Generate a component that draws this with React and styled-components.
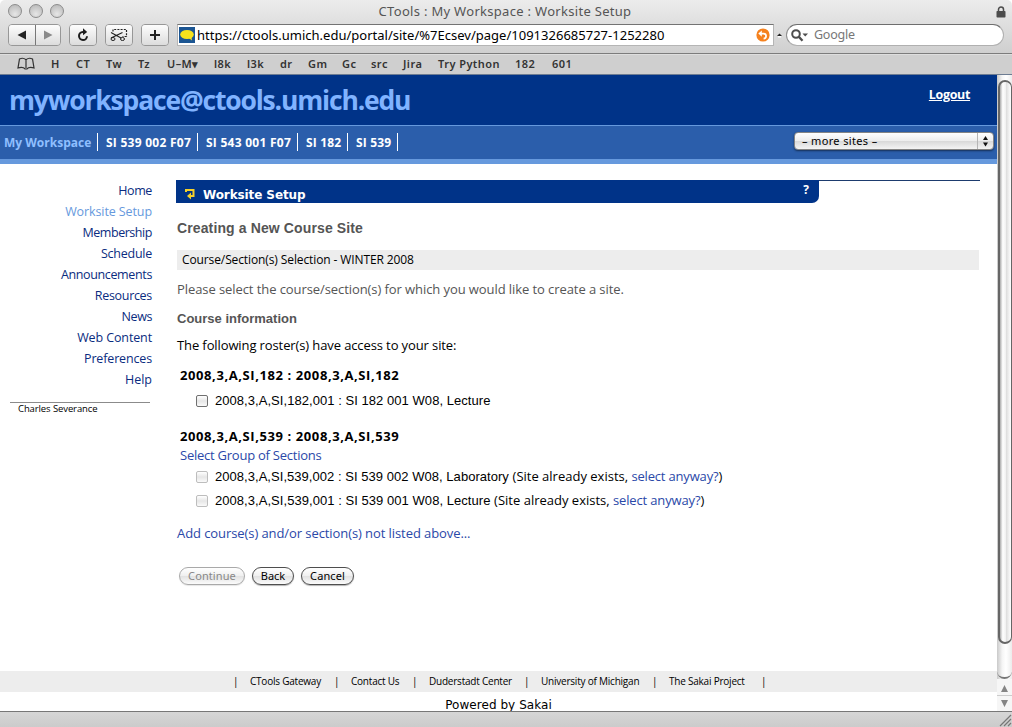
import React from "react";
import styled, { createGlobalStyle, css } from "styled-components";

const trebuchet = '"Open Sans", "Noto Sans", sans-serif';
const lucida = '"Noto Sans", "Open Sans", sans-serif';
const helvetica = '"Liberation Sans", Arial, sans-serif';
const verdana = '"DejaVu Sans", Verdana, sans-serif';

const GlobalStyle = createGlobalStyle`
  * { box-sizing: border-box; }
  body { margin: 0; background: #fff; overflow: hidden; }
`;

const Text = styled.span`
  font-family: ${(p) => p.$font || trebuchet};
  font-size: ${(p) => p.$size || 13}px;
  font-weight: ${(p) => p.$weight || 400};
  letter-spacing: ${(p) => p.$ls || 0}px;
  color: ${(p) => p.$color || "#000"};
  white-space: pre;
  line-height: 20px;
`;

const Copy = styled(Text)`
  padding-bottom: 2px;
`;

const Window = styled.div`
  width: 1012px;
  height: 727px;
  display: flex;
  flex-direction: column;
  background: #fff;
`;

const Chrome = styled.header`
  height: 54px;
  background: linear-gradient(#ececec, #cfcfcf);
  border-bottom: 1px solid #7c7c7c;
  border-radius: 5px 5px 0 0;
`;

const TitleBar = styled.div`
  height: 23px;
  display: grid;
  grid-template-columns: 100px 1fr 104px;
  align-items: center;
  padding: 0 6px 0 8px;
`;

const Lights = styled.div`
  display: flex;
  gap: 7px;
`;

const Light = styled.i`
  width: 14px;
  height: 14px;
  margin-top: -1px;
  border-radius: 50%;
  border: 1px solid #8c8c8c;
  background: radial-gradient(circle at 50% 75%, #e6e6e6, #b4b4b4);
`;

const Title = styled(Copy)`
  text-align: center;
`;

const Lock = styled.svg`
  justify-self: end;
`;

const Toolbar = styled.div`
  display: flex;
  align-items: flex-start;
  padding: 1px 8px 0;
`;

const ButtonGroup = styled.div`
  display: flex;
  margin-right: 8px;
  border: 1px solid #979797;
  border-radius: 4px;
  overflow: hidden;
`;

const ToolButton = styled.button`
  width: ${(p) => p.$w}px;
  height: 20px;
  padding: 0;
  border: 0;
  display: flex;
  align-items: center;
  justify-content: center;
  background: linear-gradient(#fdfdfd, #dcdcdc);
  & + & { border-left: 1px solid #777; }
`;

const Address = styled.div`
  width: 597px;
  height: 22px;
  display: flex;
  align-items: center;
  padding: 0 3px 0 1px;
  border: 1px solid #b5b5b5;
  border-top: 1px solid #737373;
  background: #fff;
`;

const Url = styled(Text)`
  flex: 1;
  margin-left: 2px;
`;

const Caret = styled.svg`
  margin: 9px 4px 0 3px;
`;

const Search = styled.div`
  width: 218px;
  height: 22px;
  display: flex;
  align-items: center;
  gap: 6px;
  padding-left: 4px;
  border: 1px solid #b0b0b0;
  border-top: 1px solid #6e6e6e;
  border-left-color: #8e8e8e;
  border-radius: 11px;
  background: #fff;
`;

const Bookmarks = styled.nav`
  height: 21px;
  display: flex;
  align-items: center;
  padding: 0 0 2px 17px;
  background: #cfcfcf;
  border-top: 1px solid #dedede;
  border-bottom: 1px solid #6d7c92;
`;

const BookIcon = styled.svg`
  flex: none;
  margin-right: 16px;
`;

const Cell = styled(Text)`
  flex: none;
  width: ${(p) => p.$w}px;
`;

const Viewport = styled.div`
  height: 636px;
  display: flex;
`;

const Page = styled.div`
  width: 997px;
  display: flex;
  flex-direction: column;
`;

const Banner = styled.div`
  height: 51px;
  display: flex;
  justify-content: space-between;
  padding: 0 27px 0 9px;
  background: #003388;
  border-bottom: 1px solid #6699dd;
`;

const Brand = styled(Text)`
  line-height: 50px;
`;

const Logout = styled(Text)`
  margin-top: 10px;
  text-decoration: underline;
`;

const SiteNav = styled.nav`
  height: 38px;
  display: flex;
  align-items: flex-start;
  padding: 6px 3px 0 4px;
  background: #2b5eab;
  border-bottom: 5px solid #6699dd;
`;

const SiteTab = styled(Cell)`
  height: 18px;
  margin: 1px 8px 0 0;
  line-height: 19px;
  border-right: 1px solid #fff;
`;

const SiteSelect = styled.div`
  width: 200px;
  height: 18px;
  margin-left: auto;
  display: flex;
  align-items: center;
  border: 1px solid #858585;
  border-radius: 4px;
  background: linear-gradient(#fff, #eee 48%, #d9d9d9 52%, #f4f4f4);
  box-shadow: 0 1px 2px rgba(0, 0, 0, 0.5);
`;

const SelectLabel = styled(Text)`
  flex: 1;
  padding-left: 7px;
  border-right: 1px solid #b5b5b5;
  line-height: 16px;
`;

const SelectArrows = styled.svg`
  margin: 0 4px;
`;

const Body = styled.div`
  flex: 1;
  display: flex;
  padding-top: 16px;
`;

const Sidebar = styled.aside`
  width: 176px;
  padding-right: 24px;
`;

const Menu = styled.div`
  display: flex;
  flex-direction: column;
  align-items: flex-end;
`;

const MenuItem = styled(Text)`
  height: 21px;
  line-height: 21px;
`;

const User = styled.div`
  width: 140px;
  height: 14px;
  margin: 12px 0 0 10px;
  padding: 0 0 2px 8px;
  display: flex;
  align-items: center;
  border-top: 1px solid #8b8b8b;
`;

const Main = styled.main`
  width: 804px;
`;

const ToolHeader = styled.div`
  height: 23px;
  border-top: 1px solid #1d3b6e;
`;

const ToolTab = styled.div`
  width: 643px;
  height: 23px;
  margin-top: -1px;
  display: flex;
  align-items: center;
  padding: 5px 10px 0 9px;
  border-bottom-right-radius: 7px;
  background: #003388;
`;

const ToolTitle = styled(Text)`
  flex: 1;
  margin: 2px 0 0 8px;
`;

const HelpMark = styled(Text)`
  margin-top: -9px;
`;

const Row = styled.div`
  height: 20px;
  margin-top: ${(p) => p.$top || 0}px;
  padding-left: ${(p) => p.$left || 1}px;
  display: flex;
  align-items: center;
  ${(p) => p.$band && css`
    margin-left: 1px;
    margin-right: 1px;
    background: #ededed;
  `}
`;

const Checkbox = styled.i`
  width: 12px;
  height: 12px;
  margin: 0 7px 0 0;
  border: 1px solid ${(p) => (p.$disabled ? "#bdbdbd" : "#707070")};
  border-radius: 2px;
  background: linear-gradient(#fff, #e6e6e6 50%, #fafafa);
`;

const Actions = styled.div`
  display: flex;
  gap: 7px;
  margin: 23px 0 0 3px;
`;

const PillButton = styled.button`
  width: ${(p) => p.$w}px;
  height: 18px;
  padding: 0;
  display: flex;
  align-items: center;
  justify-content: center;
  border: 1px solid ${(p) => (p.disabled ? "#a9a9a9" : "#4e4e4e")};
  border-radius: 10px;
  background: linear-gradient(#fff, #f0f0f0 48%, #e2e2e2 52%, #fbfbfb);
  box-shadow: 0 1px 1px rgba(0, 0, 0, ${(p) => (p.disabled ? 0.1 : 0.3)});
`;

const FooterLinks = styled.footer`
  height: 21px;
  display: flex;
  align-items: center;
  padding: 0 0 1px 233px;
  background: #ededed;
`;

const Powered = styled.div`
  height: 19px;
  display: flex;
  align-items: center;
  justify-content: center;
  padding-top: 7px;
`;

const Scrollbar = styled.div`
  width: 15px;
  display: flex;
  flex-direction: column;
  background: linear-gradient(90deg, #c9c9c9, #f5f5f5 35%, #fff 60%, #ececec);
`;

const Thumb = styled.div`
  height: 564px;
  margin: 5px 0 0 1px;
  border: 2px solid #666;
  border-right-width: 1px;
  border-radius: 7px;
  background: linear-gradient(90deg, #aaa, #fff 25%, #f2f2f2 50%, #dcdcdc 55%, #fff);
`;

const TrackEnd = styled.div`
  height: 35px;
  border-bottom: 2px solid #777;
  border-radius: 0 0 8px 8px;
`;

const Steppers = styled.svg`
  flex: none;
  background: #f6f6f6;
`;

const StatusBar = styled.div`
  height: 16px;
  display: flex;
  justify-content: flex-end;
  border-top: 1px solid #777;
  background: linear-gradient(#d6d6d6, #cbcbcb);
`;

const BOOKMARKS = [
  ["H", 25], ["CT", 30], ["Tw", 32], ["Tz", 29], ["U–M▾", 47], ["l8k", 33],
  ["l3k", 33], ["dr", 28], ["Gm", 34], ["Gc", 29], ["src", 32], ["Jira", 35],
  ["Try Python", 77], ["182", 37], ["601", 30],
];

const SITES = [
  ["My Workspace", 94, "#8fbfff", 0], ["SI 539 002 F07", 92, "#fff", 0.26],
  ["SI 543 001 F07", 92, "#fff", 0.26], ["SI 182", 42, "#fff", 0.15],
  ["SI 539", 42, "#fff", 0.15],
];

const MENU = [
  ["Home", -0.4], ["Worksite Setup", -0.1], ["Membership", -0.45], ["Schedule", -0.25],
  ["Announcements", -0.36], ["Resources", -0.3], ["News", -0.4], ["Web Content", -0.12],
  ["Preferences", -0.15], ["Help", 0],
];

const FOOTER = [
  ["CTools Gateway", 84], ["Contact Us", 61], ["Duderstadt Center", 95],
  ["University of Michigan", 111], ["The Sakai Project", 92],
];

const link = "#2a48a8";

function Toolbars() {
  return (
    <Chrome>
      <TitleBar>
        <Lights><Light /><Light /><Light /></Lights>
        <Title $font={lucida} $size={13} $ls={0.3} $color="#555">CTools : My Workspace : Worksite Setup</Title>
        <Lock width="10" height="12" viewBox="0 0 10 12">
          <path d="M2.5 6V3.5a2.5 2.5 0 0 1 5 0V6" fill="none" stroke="#4c4c4c" strokeWidth="1.5" />
          <rect x="0.5" y="5" width="9" height="6.5" rx="0.8" fill="#4c4c4c" />
        </Lock>
      </TitleBar>
      <Toolbar>
        <ButtonGroup>
          <ToolButton $w={26}>
            <svg width="10" height="10"><path d="M9 0.5v9L0.5 5z" fill="#222" /></svg>
          </ToolButton>
          <ToolButton $w={25}>
            <svg width="10" height="10"><path d="M1 0.5v9L9.5 5z" fill="#8a8a8a" /></svg>
          </ToolButton>
        </ButtonGroup>
        <ButtonGroup>
          <ToolButton $w={26}>
            <svg width="12" height="14" viewBox="0 0 12 14" fill="none" stroke="#1d1d1d" strokeWidth="2">
              <path d="M6.6 4H5.8A4 4 0 1 0 10 8.2" />
              <path d="M6 0.3L10.2 3.9L6 7.2z" fill="#1d1d1d" stroke="none" />
            </svg>
          </ToolButton>
        </ButtonGroup>
        <ButtonGroup>
          <ToolButton $w={26}>
            <svg width="18" height="14" viewBox="0 0 18 14" fill="none" stroke="#222">
              <path d="M3 3.500V1.500H16.500V8.500H12.500" strokeDasharray="2 1.2" strokeWidth="1.2" />
              <path d="M1 4.500L11 10M1 10L12.500 4.500" strokeWidth="1.1" />
              <ellipse cx="3" cy="11" rx="2" ry="1.500" />
              <ellipse cx="12.500" cy="11" rx="2" ry="1.500" />
            </svg>
          </ToolButton>
        </ButtonGroup>
        <ButtonGroup>
          <ToolButton $w={26}>
            <svg width="12" height="12"><path d="M6 1v10M1 6h10" stroke="#222" strokeWidth="2" /></svg>
          </ToolButton>
        </ButtonGroup>
        <Address>
          <svg width="16" height="16" viewBox="0 0 16 16">
            <rect width="16" height="16" fill="#1b5592" />
            <ellipse cx="8" cy="7.5" rx="6.8" ry="4.5" fill="#f6e21c" />
            <path d="M8.5 10l4.5 3.6-.6-4z" fill="#f6e21c" />
          </svg>
          <Url $font={lucida} $size={13} $ls={0.01}>https://ctools.umich.edu/portal/site/%7Ecsev/page/1091326685727-1252280</Url>
          <svg width="14" height="14" viewBox="0 0 14 14">
            <circle cx="7" cy="7" r="6.6" fill="#f5821f" />
            <path d="M5 5.600H7.600A2.300 2.300 0 0 1 7.600 10.600" fill="none" stroke="#fff" strokeWidth="1.700" />
            <path d="M5.8 2.5v6.2L2.3 5.6z" fill="#fff" />
          </svg>
        </Address>
        <Caret width="5" height="5"><path d="M0 3L2.5 0.5L5 3z" fill="#222" /><path d="M1 3h3v1.5H1z" fill="#fff" /></Caret>
        <Search>
          <svg width="17" height="13" viewBox="0 0 17 13">
            <circle cx="5" cy="5" r="3.8" fill="none" stroke="#4d4d4d" strokeWidth="2" />
            <path d="M7.8 7.8L11.5 11.8" stroke="#4d4d4d" strokeWidth="2.4" />
            <path d="M11.5 4.5h5.5L14.2 7.5z" fill="#4d4d4d" />
          </svg>
          <Text $font={lucida} $size={12.5} $ls={-0.25} $color="#777">Google</Text>
        </Search>
      </Toolbar>
    </Chrome>
  );
}

export default function App() {
  return (
    <Window>
      <GlobalStyle />
      <Toolbars />
      <Bookmarks>
        <BookIcon width="18" height="13" viewBox="0 0 18 13" fill="none" stroke="#333" strokeWidth="1.2">
          <path d="M9 2.700C7 1 4.500 1 2.500 2L1 11C3.500 10.200 6.500 10.200 8.200 12H9.800C11.500 10.200 14.500 10.200 17 11L15.500 2C13.500 1 11 1 9 2.700V11" />
        </BookIcon>
        {BOOKMARKS.map(([name, w]) => (
          <Cell key={name} $w={w} $font={lucida} $size={11} $weight={600} $ls={0.45} $color="#333">{name}</Cell>
        ))}
      </Bookmarks>
      <Viewport>
        <Page>
          <Banner>
            <Brand $size={26.5} $weight={700} $ls={-1.18} $color="#80b3ff">myworkspace@ctools.umich.edu</Brand>
            <Logout $size={12.5} $weight={700} $ls={-0.35} $color="#fff">Logout</Logout>
          </Banner>
          <SiteNav>
            {SITES.map(([name, w, color, ls]) => (
              <SiteTab key={name} $w={w} $size={12} $weight={700} $ls={ls} $color={color}>{name}</SiteTab>
            ))}
            <SiteSelect>
              <SelectLabel $font={lucida} $size={11} $ls={0.35}>– more sites –</SelectLabel>
              <SelectArrows width="7" height="12"><path d="M1 5L3.500 1L6 5zM1 7.500L3.500 11.500L6 7.500z" fill="#111" /></SelectArrows>
            </SiteSelect>
          </SiteNav>
          <Body>
            <Sidebar>
              <Menu>
                {MENU.map(([name, ls]) => (
                  <MenuItem key={name} $size={12.5} $ls={ls} $color={name === "Worksite Setup" ? "#6699dd" : "#0a2c80"}>{name}</MenuItem>
                ))}
              </Menu>
              <User><Text $size={9.5} $ls={-0.1}>Charles Severance</Text></User>
            </Sidebar>
            <Main>
              <ToolHeader>
                <ToolTab>
                  <svg width="10" height="12" viewBox="0 0 10 12" fill="none" stroke="#f4cf2c" strokeWidth="2">
                    <path d="M1 4V2H8.500V8H5" />
                    <path d="M6 4.500V11.500L2 8z" fill="#f4cf2c" stroke="none" />
                  </svg>
                  <ToolTitle $font={verdana} $size={12} $weight={700} $ls={-0.1} $color="#fff">Worksite Setup</ToolTitle>
                  <HelpMark $size={12} $weight={700} $color="#fff">?</HelpMark>
                </ToolTab>
              </ToolHeader>
              <Row $top={15}><Text $font={helvetica} $size={14} $weight={700} $ls={0.12} $color="#555">Creating a New Course Site</Text></Row>
              <Row $top={12} $left={5} $band><Text $size={12} $ls={-0.11}>Course/Section(s) Selection - WINTER 2008</Text></Row>
              <Row $top={10}><Copy $ls={-0.08} $color="#555">Please select the course/section(s) for which you would like to create a site.</Copy></Row>
              <Row $top={9}><Text $font={helvetica} $weight={700} $color="#555">Course information</Text></Row>
              <Row $top={7}><Copy $ls={-0.11}>The following roster(s) have access to your site:</Copy></Row>
              <Row $top={10} $left={4}><Copy $weight={700} $ls={0.59}>2008,3,A,SI,182 : 2008,3,A,SI,182</Copy></Row>
              <Row $top={5} $left={20}>
                <Checkbox />
                <Text $font={helvetica} $ls={0.05}>2008,3,A,SI,182,001 : SI 182 001 W08, Lecture</Text>
              </Row>
              <Row $top={16} $left={4}><Copy $weight={700} $ls={0.59}>2008,3,A,SI,539 : 2008,3,A,SI,539</Copy></Row>
              <Row $top={-1} $left={4}><Copy $ls={-0.24} $color={link}>Select Group of Sections</Copy></Row>
              <Row $top={1} $left={20}>
                <Checkbox $disabled />
                <Text $font={helvetica} $ls={0.04}>2008,3,A,SI,539,002 : SI 539 002 W08, Laboratory </Text>
                <Copy>(Site already exists, </Copy><Copy $ls={-0.18} $color={link}>select anyway?</Copy><Copy>)</Copy>
              </Row>
              <Row $top={4} $left={20}>
                <Checkbox $disabled />
                <Text $font={helvetica} $ls={0.05}>2008,3,A,SI,539,001 : SI 539 001 W08, Lecture </Text>
                <Copy>(Site already exists, </Copy><Copy $ls={-0.15} $color={link}>select anyway?</Copy><Copy>)</Copy>
              </Row>
              <Row $top={13}><Copy $ls={-0.08} $color={link}>Add course(s) and/or section(s) not listed above...</Copy></Row>
              <Actions>
                <PillButton $w={66} disabled><Text $font={lucida} $size={11} $ls={0.1} $color="#888">Continue</Text></PillButton>
                <PillButton $w={42}><Text $font={lucida} $size={11}>Back</Text></PillButton>
                <PillButton $w={53}><Text $font={lucida} $size={11} $ls={0.1}>Cancel</Text></PillButton>
              </Actions>
            </Main>
          </Body>
          <FooterLinks>
            {FOOTER.map(([name, w]) => (
              <React.Fragment key={name}>
                <Cell $w={17} $size={10}>|</Cell>
                <Cell $w={w} $size={10} $ls={-0.22}>{name}</Cell>
              </React.Fragment>
            ))}
            <Text $size={10}>|</Text>
          </FooterLinks>
          <Powered><Text $font={verdana} $size={12} $ls={0.05}>Powered by Sakai</Text></Powered>
        </Page>
        <Scrollbar>
          <Thumb />
          <TrackEnd />
          <Steppers width="15" height="32">
            <path d="M4 13L7.500 6L11 13zM4 21L7.500 28L11 21z" fill="#858585" />
            <path d="M0 16.500H15" stroke="#ccc" />
          </Steppers>
        </Scrollbar>
      </Viewport>
      <StatusBar>
        <svg width="15" height="15"><path d="M3 14L14 3M7 14L14 7M11 14L14 11" stroke="#777" strokeWidth="1.2" /></svg>
      </StatusBar>
    </Window>
  );
}
